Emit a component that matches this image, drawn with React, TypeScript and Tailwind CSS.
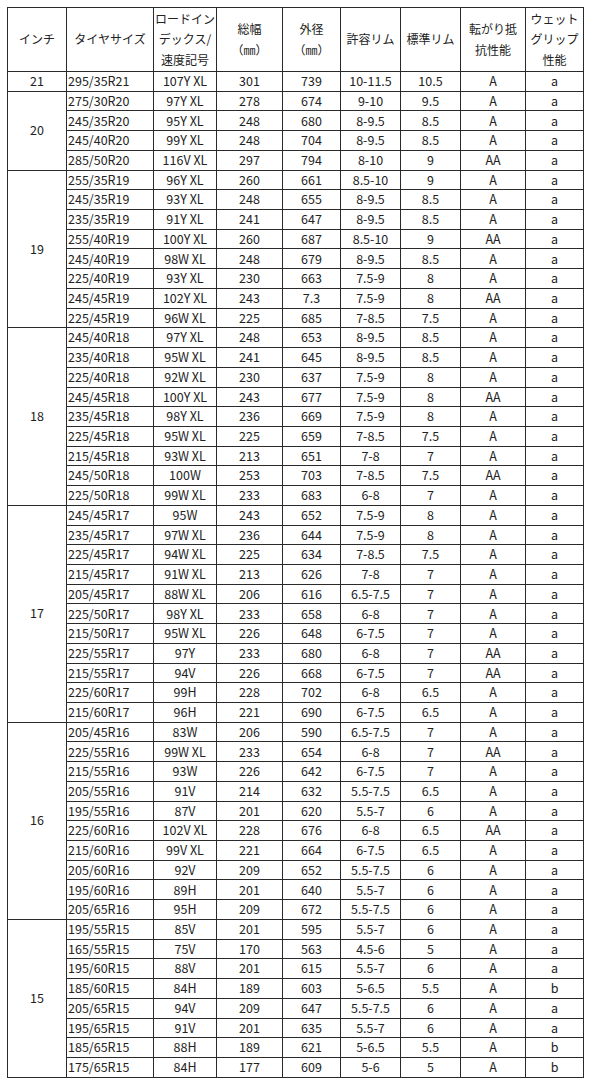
import React from "react";

type Row = [string, string, string, string, string, string, string, string];

const groups: { inch: string; span: string; rows: Row[] }[] = [
  {
    inch: "21",
    span: "row-span-1",
    rows: [["295/35R21", "107Y XL", "301", "739", "10-11.5", "10.5", "A", "a"]],
  },
  {
    inch: "20",
    span: "row-span-4",
    rows: [
      ["275/30R20", "97Y XL", "278", "674", "9-10", "9.5", "A", "a"],
      ["245/35R20", "95Y XL", "248", "680", "8-9.5", "8.5", "A", "a"],
      ["245/40R20", "99Y XL", "248", "704", "8-9.5", "8.5", "A", "a"],
      ["285/50R20", "116V XL", "297", "794", "8-10", "9", "AA", "a"],
    ],
  },
  {
    inch: "19",
    span: "row-span-8",
    rows: [
      ["255/35R19", "96Y XL", "260", "661", "8.5-10", "9", "A", "a"],
      ["245/35R19", "93Y XL", "248", "655", "8-9.5", "8.5", "A", "a"],
      ["235/35R19", "91Y XL", "241", "647", "8-9.5", "8.5", "A", "a"],
      ["255/40R19", "100Y XL", "260", "687", "8.5-10", "9", "AA", "a"],
      ["245/40R19", "98W XL", "248", "679", "8-9.5", "8.5", "A", "a"],
      ["225/40R19", "93Y XL", "230", "663", "7.5-9", "8", "A", "a"],
      ["245/45R19", "102Y XL", "243", "7.3", "7.5-9", "8", "AA", "a"],
      ["225/45R19", "96W XL", "225", "685", "7-8.5", "7.5", "A", "a"],
    ],
  },
  {
    inch: "18",
    span: "row-span-9",
    rows: [
      ["245/40R18", "97Y XL", "248", "653", "8-9.5", "8.5", "A", "a"],
      ["235/40R18", "95W XL", "241", "645", "8-9.5", "8.5", "A", "a"],
      ["225/40R18", "92W XL", "230", "637", "7.5-9", "8", "A", "a"],
      ["245/45R18", "100Y XL", "243", "677", "7.5-9", "8", "AA", "a"],
      ["235/45R18", "98Y XL", "236", "669", "7.5-9", "8", "A", "a"],
      ["225/45R18", "95W XL", "225", "659", "7-8.5", "7.5", "A", "a"],
      ["215/45R18", "93W XL", "213", "651", "7-8", "7", "A", "a"],
      ["245/50R18", "100W", "253", "703", "7-8.5", "7.5", "AA", "a"],
      ["225/50R18", "99W XL", "233", "683", "6-8", "7", "A", "a"],
    ],
  },
  {
    inch: "17",
    span: "row-span-11",
    rows: [
      ["245/45R17", "95W", "243", "652", "7.5-9", "8", "A", "a"],
      ["235/45R17", "97W XL", "236", "644", "7.5-9", "8", "A", "a"],
      ["225/45R17", "94W XL", "225", "634", "7-8.5", "7.5", "A", "a"],
      ["215/45R17", "91W XL", "213", "626", "7-8", "7", "A", "a"],
      ["205/45R17", "88W XL", "206", "616", "6.5-7.5", "7", "A", "a"],
      ["225/50R17", "98Y XL", "233", "658", "6-8", "7", "A", "a"],
      ["215/50R17", "95W XL", "226", "648", "6-7.5", "7", "A", "a"],
      ["225/55R17", "97Y", "233", "680", "6-8", "7", "AA", "a"],
      ["215/55R17", "94V", "226", "668", "6-7.5", "7", "AA", "a"],
      ["225/60R17", "99H", "228", "702", "6-8", "6.5", "A", "a"],
      ["215/60R17", "96H", "221", "690", "6-7.5", "6.5", "A", "a"],
    ],
  },
  {
    inch: "16",
    span: "row-span-10",
    rows: [
      ["205/45R16", "83W", "206", "590", "6.5-7.5", "7", "A", "a"],
      ["225/55R16", "99W XL", "233", "654", "6-8", "7", "AA", "a"],
      ["215/55R16", "93W", "226", "642", "6-7.5", "7", "A", "a"],
      ["205/55R16", "91V", "214", "632", "5.5-7.5", "6.5", "A", "a"],
      ["195/55R16", "87V", "201", "620", "5.5-7", "6", "A", "a"],
      ["225/60R16", "102V XL", "228", "676", "6-8", "6.5", "AA", "a"],
      ["215/60R16", "99V XL", "221", "664", "6-7.5", "6.5", "A", "a"],
      ["205/60R16", "92V", "209", "652", "5.5-7.5", "6", "A", "a"],
      ["195/60R16", "89H", "201", "640", "5.5-7", "6", "A", "a"],
      ["205/65R16", "95H", "209", "672", "5.5-7.5", "6", "A", "a"],
    ],
  },
  {
    inch: "15",
    span: "row-span-8",
    rows: [
      ["195/55R15", "85V", "201", "595", "5.5-7", "6", "A", "a"],
      ["165/55R15", "75V", "170", "563", "4.5-6", "5", "A", "a"],
      ["195/60R15", "88V", "201", "615", "5.5-7", "6", "A", "a"],
      ["185/60R15", "84H", "189", "603", "5-6.5", "5.5", "A", "b"],
      ["205/65R15", "94V", "209", "647", "5.5-7.5", "6", "A", "a"],
      ["195/65R15", "91V", "201", "635", "5.5-7", "6", "A", "a"],
      ["185/65R15", "88H", "189", "621", "5-6.5", "5.5", "A", "b"],
      ["175/65R15", "84H", "177", "609", "5-6", "5", "A", "b"],
    ],
  },
];

const headers: string[][] = [
  ["インチ"],
  ["タイヤサイズ"],
  ["ロードイン", "デックス/", "速度記号"],
  ["総幅", "（㎜）"],
  ["外径", "（㎜）"],
  ["許容リム"],
  ["標準リム"],
  ["転がり抵", "抗性能"],
  ["ウェット", "グリップ", "性能"],
];

export default function App() {
  return (
    <div
      className="w-[594px] h-[1090px] bg-white pt-[7px] pl-[7px] text-[#222]"
      style={{ fontFamily: '"Noto Sans CJK JP", "Noto Sans", sans-serif' }}
    >
      <div className="grid w-[577px] grid-cols-[58px_86px_62px_65px_57px_59px_59px_64px_57px] grid-rows-[63px_repeat(51,18.72px)] gap-px bg-[#2a2a2a] p-px text-[12.5px]">
        {headers.map((h, i) => (
          <div
            key={"h" + i}
            className="flex flex-col items-center justify-center bg-white text-[12px] leading-[20.5px]"
          >
            {h.map((l, j) => (
              <span key={j}>{l}</span>
            ))}
          </div>
        ))}
        {groups.map((g) => (
          <React.Fragment key={g.inch}>
            <div className={`col-start-1 ${g.span} flex items-center justify-center bg-white`}>
              {g.inch}
            </div>
            {g.rows.map((r) => (
              <React.Fragment key={r[0]}>
                {r.map((c, k) => (
                  <div
                    key={k}
                    className={
                      k === 0
                        ? "flex items-center bg-white pl-[1px] leading-none whitespace-nowrap"
                        : "flex items-center justify-center bg-white leading-none whitespace-nowrap"
                    }
                  >
                    {c}
                  </div>
                ))}
              </React.Fragment>
            ))}
          </React.Fragment>
        ))}
      </div>
    </div>
  );
}
